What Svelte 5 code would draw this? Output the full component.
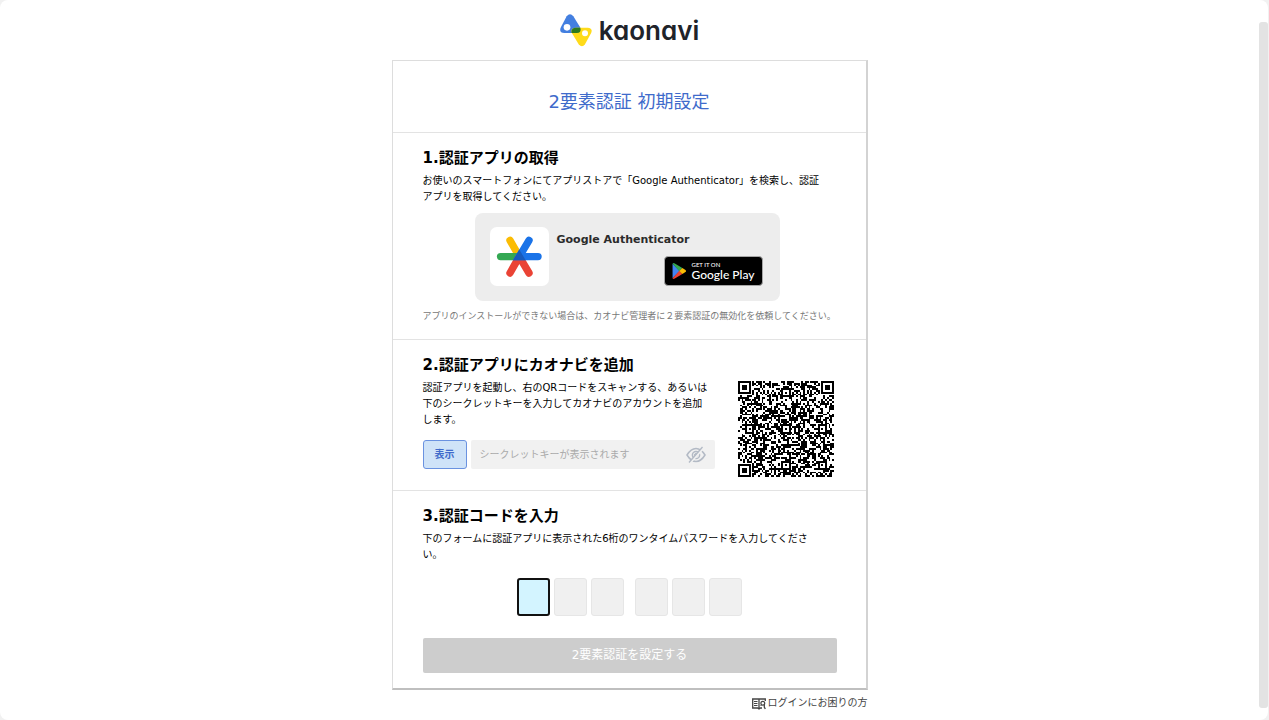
<script lang="ts">
	let digits = $state(['', '', '', '', '', '']);

	const size = 53;
	const finders = [
		[0, 0],
		[size - 7, 0],
		[0, size - 7]
	];
	const alignments = [
		[26, 6],
		[6, 26],
		[26, 26],
		[46, 26],
		[26, 46],
		[46, 46]
	];

	const isDark = (x: number, y: number, seed: number) => {
		for (const [fx, fy] of finders) {
			const d = Math.max(Math.abs(x - fx - 3), Math.abs(y - fy - 3));
			if (d <= 4) return d === 3 || d < 2;
		}

		for (const [ax, ay] of alignments) {
			const d = Math.max(Math.abs(x - ax), Math.abs(y - ay));
			if (d <= 2) return d !== 1;
		}

		if (x === 6 || y === 6) return (x + y) % 2 === 0;

		return seed % 100 < 51;
	};

	const buildCode = () => {
		let path = '';
		let seed = 20417;

		for (let y = 0; y < size; y++) {
			for (let x = 0; x < size; x++) {
				seed = (seed * 16807) % 2147483647;
				if (isDark(x, y, seed)) path += `M${x} ${y}h1v1h-1z`;
			}
		}

		return path;
	};

	const code = buildCode();
</script>

<div class="frame">
	<div class="page">
		<main>
			<div class="logo">
				<svg viewBox="0 0 96 99" width="32" height="33" aria-hidden="true">
					<path d="M20 7Q30-6 40 7L60 39Q67 57 50 57H13Q-5 56 3 39Z" fill="#437fe0" />
					<path d="M46 41H83Q100 43 93 58L75 91Q66 103 56 91L36 58Q30 43 46 41Z" fill="#ffdb1a" />
					<path d="M46 41H61Q65 57 50 57H35Q32 43 46 41Z" fill="#2c7a1d" />
					<circle cx="21" cy="40" r="10" fill="#fff" />
					<circle cx="75" cy="58" r="9" fill="#fff" />
				</svg>
				<span>kaonavi</span>
			</div>

			<div class="card">
				<h1>2要素認証 初期設定</h1>

				<section>
					<h2>1.認証アプリの取得</h2>
					<p>
						お使いのスマートフォンにてアプリストアで「Google Authenticator」を検索し、認証<br
						/>アプリを取得してください。
					</p>
					<div class="app">
						<svg class="app-icon" viewBox="0 0 59 59" width="59" height="59" aria-hidden="true">
							<rect width="59" height="59" rx="7" fill="#fff" />
							<g stroke-width="7.4" stroke-linecap="round">
								<path d="M29.3 29.6L20 13.4" stroke="#fbbc04" />
								<path d="M10.6 29.6H29" stroke="#34a853" />
								<path d="M29.3 29.6L20 46M29.3 29.6L39 46" stroke="#ea4335" />
								<path d="M48 29.6H29.3L39 13.4" stroke="#1a73e8" fill="none" />
							</g>
							<path d="M29.3 22.4L35.6 33.3H23Z" fill="#185abc" />
						</svg>
						<div class="app-body">
							<strong>Google Authenticator</strong>
							<a class="play" href="#play">
								<svg viewBox="0 0 50 58" width="17" height="20" aria-hidden="true">
									<path d="M2 3V55L27 29Z" fill="#4285f4" />
									<path d="M2 3Q5-1 10 2L37 18L26 30Z" fill="#34a853" />
									<path d="M2 55Q5 59 10 56L37 40L26 28Z" fill="#ea4335" />
									<path d="M37 18L48 25Q52 29 48 33L37 40L26 29Z" fill="#fbbc04" />
								</svg>
								<span class="play-text"><small>GET IT ON</small>Google Play</span>
							</a>
						</div>
					</div>
					<p class="note">
						アプリのインストールができない場合は、カオナビ管理者に２要素認証の無効化を依頼してください。
					</p>
				</section>

				<section class="add">
					<div class="add-body">
						<h2>2.認証アプリにカオナビを追加</h2>
						<p>
							認証アプリを起動し、右のQRコードをスキャンする、あるいは<br
							/>下のシークレットキーを入力してカオナビのアカウントを追加<br />します。
						</p>
						<div class="key">
							<button class="show" type="button">表示</button>
							<div class="secret">
								<input
									type="text"
									readonly
									aria-label="シークレットキー"
									placeholder="シークレットキーが表示されます"
								/>
								<svg viewBox="0 0 20 18" width="20" height="18" fill="none" stroke="#b3bac5" aria-hidden="true">
									<path d="M1 9Q5 2.5 10 2.5T19 9Q15 15.5 10 15.5T1 9Z" stroke-width="1.5" />
									<circle cx="10" cy="9" r="3.6" stroke-width="1.5" />
									<circle cx="10" cy="9" r="1.5" fill="#b3bac5" />
									<path d="M4 17L17.5 2" stroke="#f1f1f1" stroke-width="2" />
									<path d="M3 16.5L16.5 1" stroke-width="1.4" />
								</svg>
							</div>
						</div>
					</div>
					<svg class="qr" viewBox="0 0 {size} {size}" role="img" aria-label="QRコード" shape-rendering="crispEdges">
						<path d={code} />
					</svg>
				</section>

				<section>
					<h2>3.認証コードを入力</h2>
					<p>
						下のフォームに認証アプリに表示された6桁のワンタイムパスワードを入力してくださ<br />い。
					</p>
					<div class="digits">
						{#each digits as _, i}
							<input
								class:active={i === 0}
								type="text"
								inputmode="numeric"
								maxlength="1"
								aria-label="{i + 1}桁目"
								bind:value={digits[i]}
							/>
						{/each}
					</div>
					<button class="submit" type="submit" disabled>2要素認証を設定する</button>
				</section>
			</div>

			<a class="help" href="#help">
				<svg viewBox="0 0 14 13" width="14" height="13" fill="none" stroke="#444" aria-hidden="true">
					<path d="M7 2H.7V11H5.5L7 12L8.5 11H10M7 2V12M7 2H13.3V4" stroke-width="1.3" />
					<path d="M2 4.5H5.5M2 6.5H5.5M2 8.5H5.5M8.5 8.5H9.5" />
					<circle cx="10.8" cy="6.2" r="1.9" stroke-width="1.2" />
					<path d="M12.3 7.5V10L13.3 12" stroke-width="1.3" />
				</svg>
				ログインにお困りの方
			</a>
		</main>
		<div class="scroll"></div>
	</div>
</div>

<style>
	:global(body) {
		background: #f1f1f1;
	}

	.frame {
		box-sizing: border-box;
		min-height: 100vh;
		padding-right: 1px;
		display: flex;
		font-family: 'DejaVu Sans', 'Noto Sans CJK JP', sans-serif;
		font-size: 10px;
		line-height: 16px;
		color: #000;
	}

	.page {
		flex: 1;
		display: flex;
		background: #fff;
		border-radius: 8px;
	}

	main {
		flex: 1;
		display: flex;
		flex-direction: column;
		align-items: center;
	}

	.scroll {
		width: 9px;
		margin: 22px 0 12px;
		border-radius: 3px;
		background: #e3e3e3;
	}

	.logo {
		display: flex;
		align-items: center;
		gap: 7px;
		padding: 14px 0 13px;
	}

	.logo span {
		font: 600 26px/32px Inter, sans-serif;
		font-feature-settings: 'cv11';
		color: #20232a;
	}

	.card {
		box-sizing: border-box;
		width: 100%;
		max-width: 476px;
		border: 1px solid #ddd;
		border-right: 2px solid #d3d3d3;
		border-bottom: 2px solid #bfbfbf;
	}

	h1,
	h2,
	p {
		margin: 0;
	}

	h1 {
		padding: 28px 0 17px;
		border-bottom: 1px solid #e3e3e3;
		font-size: 18px;
		font-weight: 400;
		line-height: 26px;
		text-align: center;
		color: #3f6bcb;
	}

	section {
		padding: 15px 29px 15px 30px;
		border-bottom: 1px solid #e3e3e3;
	}

	section:last-child {
		border-bottom: 0;
	}

	h2 {
		margin-bottom: 5px;
		font-size: 15px;
		line-height: 20px;
	}

	.app {
		box-sizing: border-box;
		width: 305px;
		margin: 8px auto 7px 52px;
		padding: 14px 17px 15px 15px;
		display: flex;
		gap: 8px;
		border-radius: 8px;
		background: #ededed;
	}

	.app-body {
		flex: 1;
		display: flex;
		flex-direction: column;
		justify-content: space-between;
	}

	.app-body strong {
		padding-top: 5px;
		font-size: 11px;
		color: #2b2b2b;
	}

	.play {
		box-sizing: border-box;
		align-self: flex-end;
		width: 99px;
		height: 30px;
		padding: 0 7px;
		display: flex;
		align-items: center;
		gap: 6px;
		border: 1px solid #a6a6a6;
		border-radius: 4px;
		background: #000;
		color: #fff;
		font: 500 12px/13px Lato, sans-serif;
		text-decoration: none;
		white-space: nowrap;
	}

	.play small {
		display: block;
		font-size: 6px;
		line-height: 7px;
	}

	.note {
		font-size: 9px;
		color: #777;
		white-space: nowrap;
	}

	.add {
		display: flex;
		justify-content: space-between;
		padding: 15px 32px 13px 30px;
	}

	.add-body {
		width: 292px;
	}

	.qr {
		width: 96px;
		height: 96px;
		margin-top: 26px;
	}

	.key {
		display: flex;
		gap: 4px;
		margin-top: 12px;
	}

	button,
	input {
		box-sizing: border-box;
		margin: 0;
		padding: 0;
		font: inherit;
	}

	.show {
		width: 44px;
		height: 29px;
		border: 1px solid #6a92e0;
		border-radius: 3px;
		background: #cfe3f8;
		font-weight: 700;
		color: #3f6bcb;
	}

	.secret {
		flex: 1;
		display: flex;
		align-items: center;
		padding: 0 9px;
		border-radius: 2px;
		background: #f1f1f1;
	}

	.secret input {
		flex: 1;
		min-width: 0;
		border: 0;
		background: none;
	}

	.secret input::placeholder {
		color: #aaa;
	}

	.digits {
		display: flex;
		justify-content: center;
		gap: 4px;
		margin: 15px 0 22px;
	}

	.digits input {
		width: 33px;
		height: 38px;
		border: 1px solid #e6e6e6;
		border-radius: 3px;
		background: #f0f0f0;
		text-align: center;
	}

	.digits input:nth-child(4) {
		margin-left: 7px;
	}

	.digits .active {
		border: 2px solid #111;
		background: #d3f4ff;
	}

	.submit {
		display: block;
		width: 100%;
		height: 35px;
		padding-bottom: 2px;
		border: 0;
		border-radius: 2px;
		background: #cdcdcd;
		font-size: 12px;
		color: #fff;
	}

	.help {
		width: 100%;
		max-width: 476px;
		margin-top: 5px;
		display: flex;
		align-items: center;
		justify-content: flex-end;
		gap: 2px;
		color: #444;
		text-decoration: none;
	}
</style>
